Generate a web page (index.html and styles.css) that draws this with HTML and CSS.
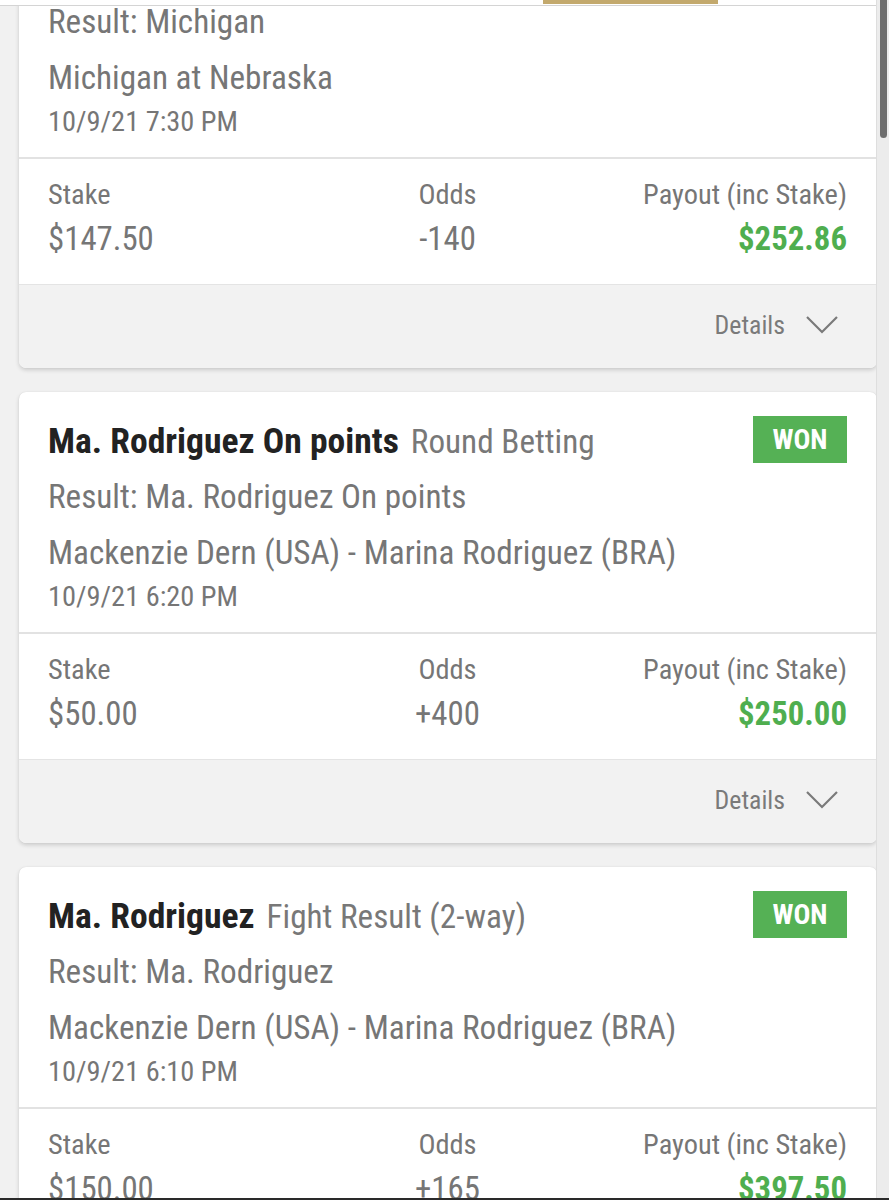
FILE: index.html
```html
<!DOCTYPE html>
<html>
<head>
<meta charset="utf-8">
<link rel="stylesheet" href="styles.css">
</head>
<body>
<div class="topbar"><div class="gold"></div></div>
<div class="scrollbar"><div class="thumb"></div></div>
<main class="list">
  <section class="card first">
    <div class="result">Result: Michigan</div>
    <div class="event">Michigan at Nebraska</div>
    <div class="date">10/9/21 7:30 PM</div>
    <div class="stats">
      <div class="col"><div class="label">Stake</div><div class="value">$147.50</div></div>
      <div class="col mid"><div class="label">Odds</div><div class="value">-140</div></div>
      <div class="col right"><div class="label">Payout (inc Stake)</div><div class="value pay">$252.86</div></div>
    </div>
    <div class="details"><span>Details</span><svg class="chev" width="34" height="20" viewBox="0 0 34 20"><path d="M2 2 L17 17 L32 2" fill="none" stroke="#7a7a7a" stroke-width="2.2"/></svg></div>
  </section>

  <section class="card">
    <div class="head">
      <div class="title"><b>Ma. Rodriguez On points</b><span class="market">Round Betting</span></div>
      <div class="badge">WON</div>
    </div>
    <div class="result">Result: Ma. Rodriguez On points</div>
    <div class="event">Mackenzie Dern (USA) - Marina Rodriguez (BRA)</div>
    <div class="date">10/9/21 6:20 PM</div>
    <div class="stats">
      <div class="col"><div class="label">Stake</div><div class="value">$50.00</div></div>
      <div class="col mid"><div class="label">Odds</div><div class="value">+400</div></div>
      <div class="col right"><div class="label">Payout (inc Stake)</div><div class="value pay">$250.00</div></div>
    </div>
    <div class="details"><span>Details</span><svg class="chev" width="34" height="20" viewBox="0 0 34 20"><path d="M2 2 L17 17 L32 2" fill="none" stroke="#7a7a7a" stroke-width="2.2"/></svg></div>
  </section>

  <section class="card">
    <div class="head">
      <div class="title"><b>Ma. Rodriguez</b><span class="market">Fight Result (2-way)</span></div>
      <div class="badge">WON</div>
    </div>
    <div class="result">Result: Ma. Rodriguez</div>
    <div class="event">Mackenzie Dern (USA) - Marina Rodriguez (BRA)</div>
    <div class="date">10/9/21 6:10 PM</div>
    <div class="stats">
      <div class="col"><div class="label">Stake</div><div class="value">$150.00</div></div>
      <div class="col mid"><div class="label">Odds</div><div class="value">+165</div></div>
      <div class="col right"><div class="label">Payout (inc Stake)</div><div class="value pay">$397.50</div></div>
    </div>
    <div class="details"><span>Details</span><svg class="chev" width="34" height="20" viewBox="0 0 34 20"><path d="M2 2 L17 17 L32 2" fill="none" stroke="#7a7a7a" stroke-width="2.2"/></svg></div>
  </section>
</main>
<div class="bottomline"></div>
</body>
</html>
```
FILE: styles.css
```css
html, body {
  margin: 0;
  padding: 0;
  height: 1200px;
  overflow: hidden;
}
body {
  background: #f1f1f1;
  font-family: "Roboto", "Liberation Sans", sans-serif;
  font-stretch: condensed;
  color: #767676;
}
.topbar {
  position: fixed;
  top: 0;
  left: 0;
  right: 0;
  height: 5px;
  background: #ffffff;
  border-bottom: 1px solid #d4d4d4;
  z-index: 5;
}
.gold {
  position: absolute;
  left: 543px;
  top: 0;
  width: 175px;
  height: 4px;
  background: #c3a96d;
}
.scrollbar {
  position: fixed;
  top: 0;
  right: 0;
  width: 12px;
  height: 1200px;
  background: #ececec;
  border-left: 1px solid #dedede;
  z-index: 6;
}
.thumb {
  position: absolute;
  top: 0;
  left: 3px;
  width: 7px;
  height: 138px;
  border-radius: 0 0 4px 4px;
  background: #6e6e6e;
}
.list {
  display: flex;
  flex-direction: column;
  gap: 24px;
  padding: 0 12px 0 19px;
  margin-top: -10px;
}
.card {
  background: #ffffff;
  border-radius: 7px;
  box-shadow: 0 2px 4px rgba(0,0,0,0.16), 0 0 1px rgba(0,0,0,0.12);
  overflow: hidden;
}
.head {
  display: flex;
  justify-content: space-between;
  align-items: center;
  height: 47px;
  padding: 24px 30px 0 29px;
}
.title {
  font-size: 33.2px;
  white-space: nowrap;
  padding-top: 3px;
}
.title b {
  font-weight: 700;
  font-size: 35.6px;
  color: #222222;
}
.market {
  color: #787878;
  margin-left: 12px;
}
.badge {
  width: 94px;
  height: 47px;
  background: #55b155;
  color: #ffffff;
  font-weight: 700;
  font-size: 28px;
  display: flex;
  align-items: center;
  justify-content: center;
}
.result, .event, .date {
  padding: 0 29px;
  white-space: nowrap;
}
.result {
  font-size: 33.2px;
  line-height: 40px;
  margin-top: 14px;
}
.first .result {
  margin-top: 12px;
}
.event {
  font-size: 33.2px;
  line-height: 40px;
  margin-top: 16px;
}
.date {
  font-size: 28.4px;
  line-height: 36px;
  margin-top: 6px;
  padding-bottom: 17px;
  border-bottom: 2px solid #e2e2e2;
}
.stats {
  display: grid;
  grid-template-columns: 1fr 1fr 1fr;
  padding: 18px 30px 25px 29px;
}
.col.mid {
  text-align: center;
}
.col.right {
  text-align: right;
}
.label {
  font-size: 28.4px;
  line-height: 36px;
}
.value {
  font-size: 32.8px;
  line-height: 40px;
  margin-top: 6px;
}
.value.pay {
  color: #4fae4f;
  font-weight: 700;
}
.details {
  background: #f2f2f2;
  border-top: 1px solid #e4e4e4;
  height: 84px;
  display: flex;
  align-items: center;
  justify-content: flex-end;
  gap: 20px;
  padding-right: 38px;
  padding-bottom: 3px;
  box-sizing: border-box;
  font-size: 25.8px;
  color: #7a7a7a;
}
.chev {
  display: block;
  margin-top: 0;
}
.bottomline {
  position: fixed;
  left: 0;
  right: 0;
  bottom: 0;
  height: 2px;
  background: #2a2a2a;
  z-index: 7;
}
```
